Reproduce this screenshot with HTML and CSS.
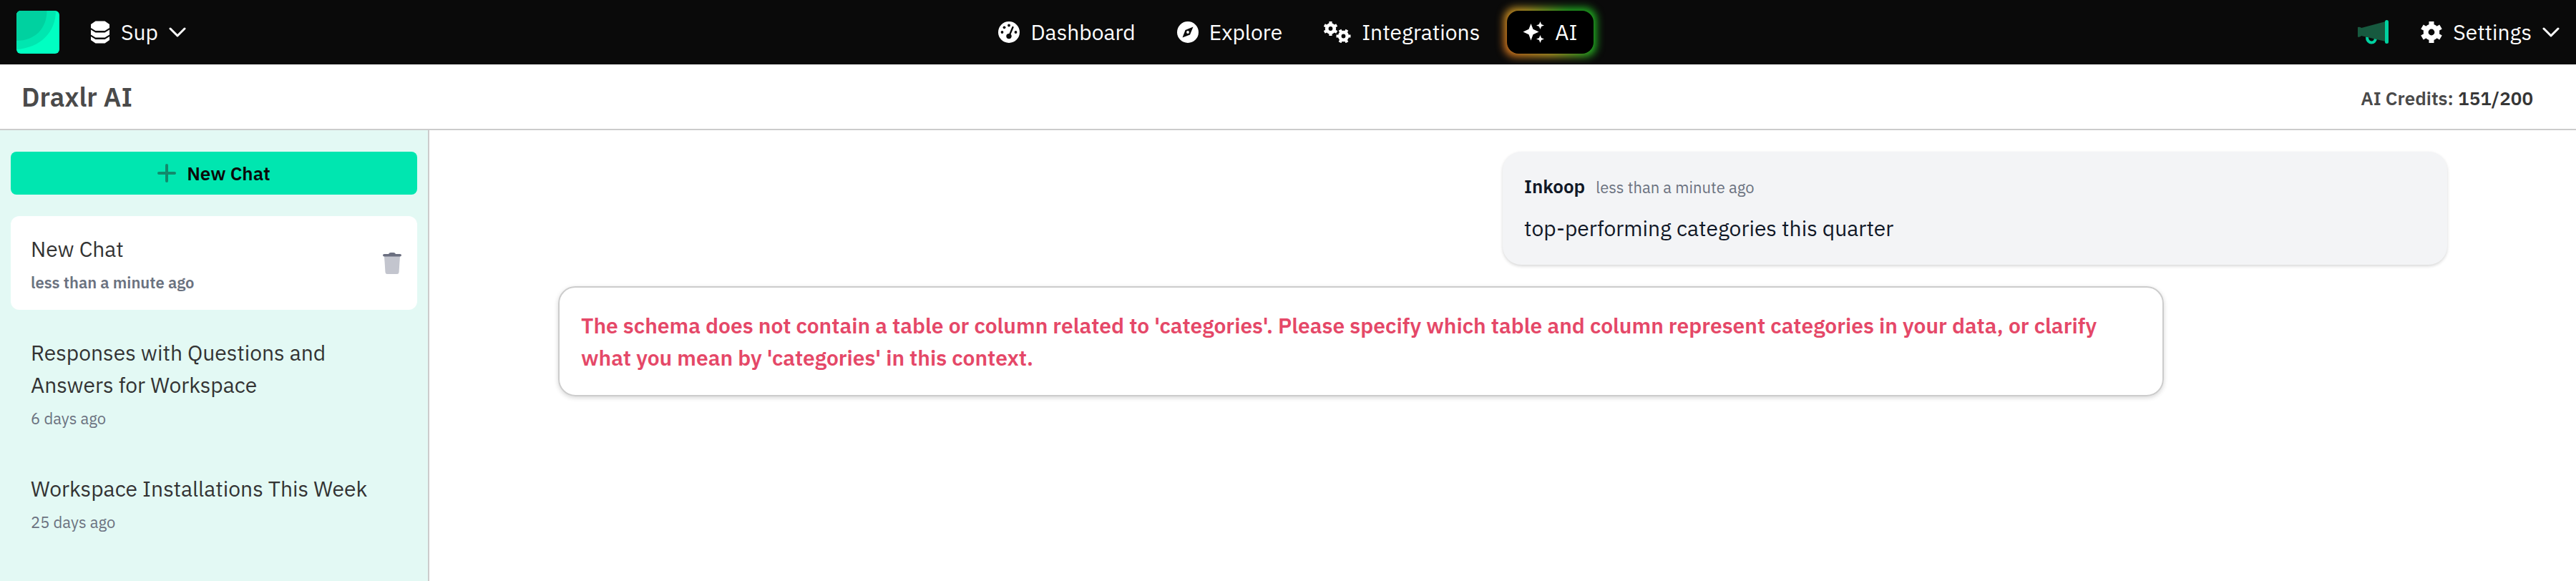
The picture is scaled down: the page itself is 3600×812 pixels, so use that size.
FILE: index.html
```html
<!DOCTYPE html>
<html lang="en">
<head>
    <meta charset="UTF-8">
    <meta name="viewport" content="width=device-width, initial-scale=1.0">
    <title>Draxlr AI</title>
    <link rel="stylesheet" href="styles.css">
</head>
<body>
    <!-- Top Navigation -->
    <nav class="navbar">
        <div class="nav-left">
            <a href="#" class="logo" aria-label="Draxlr">
                <svg width="60" height="60" viewBox="0 0 60 60">
                    <rect width="60" height="60" fill="#00ffc2"/>
                    <path d="M0 0h55c0 30-22 52-55 54z" fill="#00e6b0"/>
                    <path d="M0 0h42.500c0 25-17 42-42.500 42z" fill="#00d1a0"/>
                </svg>
            </a>
            <button type="button" class="nav-item">
                <svg width="28" height="32" viewBox="0 0 28 32" fill="#fff">
                    <path d="M7.500 0.500h13L27 5v5l-6.500 4h-13L1 10V5z"/>
                    <path d="M1 12.500l6.500 4h13l6.500-4v7l-6.500 4h-13L1 19.500z"/>
                    <path d="M1 22l6.500 4h13l6.500-4v5l-6.500 4.500h-13L1 27z"/>
                </svg>
                <span>Sup</span>
                <svg class="chevron" width="24" height="14" viewBox="0 0 24 14"><path d="M2 2l10 10L22 2"/></svg>
            </button>
        </div>

        <div class="nav-links">
            <a href="#" class="nav-item">
                <svg width="30" height="30" viewBox="0 0 30 30">
                    <circle cx="15" cy="15" r="15" fill="#fff"/>
                    <g fill="#0a0a0a">
                        <circle cx="5.500" cy="15" r="1.900"/>
                        <circle cx="8.500" cy="8.300" r="1.900"/>
                        <circle cx="15" cy="5.500" r="1.900"/>
                        <circle cx="24.500" cy="15" r="1.900"/>
                        <circle cx="15" cy="20.600" r="3.700"/>
                    </g>
                    <path d="M15.800 19l4.700-11" stroke="#0a0a0a" stroke-width="2.400" stroke-linecap="round"/>
                </svg>
                <span>Dashboard</span>
            </a>
            <a href="#" class="nav-item">
                <svg width="30" height="30" viewBox="0 0 30 30">
                    <circle cx="15" cy="15" r="15" fill="#fff"/>
                    <path d="M22.500 7.500l-4.500 11-10.500 4 4-10.500z" fill="#0a0a0a"/>
                    <circle cx="15" cy="15" r="1.900" fill="#fff"/>
                </svg>
                <span>Explore</span>
            </a>
            <a href="#" class="nav-item">
                <svg width="38" height="30" viewBox="0 0 38 30" fill="none" stroke="#fff">
                    <g transform="translate(9.500 10)">
                        <circle r="5.300" stroke-width="4.800"/>
                        <path d="M0-7v-3M6.100-3.500l2.600-1.500M6.100 3.500L8.700 5M0 7v3M-6.100 3.500L-8.700 5M-6.100-3.500L-8.700-5" stroke-width="4.200"/>
                    </g>
                    <g transform="translate(27.500 20.500)">
                        <circle r="5.300" stroke-width="4.800"/>
                        <path d="M7 0h3M3.500 6.100L5 8.700M-3.500 6.100L-5 8.700M-7 0h-3M-3.500-6.100L-5-8.700M3.500-6.100L5-8.700" stroke-width="4.200"/>
                    </g>
                </svg>
                <span>Integrations</span>
            </a>
            <a href="#" class="nav-item nav-ai">
                <svg width="30" height="30" viewBox="0 0 30 30" fill="#fff">
                    <path d="M11.500 3l3 7.800 8 3.700-8 3.700-3 8.300-3-8.300-8-3.700 8-3.700z"/>
                    <path d="M24.500 0l1.600 3.900L30 5.500l-3.900 1.600-1.600 3.900-1.600-3.900L19 5.500l3.900-1.600z"/>
                    <path d="M24.500 19l1.600 3.900 3.900 1.600-3.900 1.600-1.600 3.900-1.600-3.900-3.900-1.600 3.900-1.600z"/>
                </svg>
                <span>AI</span>
            </a>
        </div>

        <div class="nav-right">
            <button type="button" class="nav-item" aria-label="Announcements">
                <svg width="44" height="36" viewBox="0 0 44 36">
                    <path d="M13 24.500c-.5 10.500 12.500 10.500 12 1" fill="none" stroke="#00d1a0" stroke-width="4"/>
                    <path d="M0 11q3-1 5 1L39 3v28L5 23q-2 2.500-5 1.500z" fill="#17593f"/>
                    <rect x="38" y="1" width="5" height="33" rx="2.500" fill="#00d1a0"/>
                </svg>
            </button>
            <button type="button" class="nav-item">
                <svg width="30" height="30" viewBox="0 0 30 30" fill="none" stroke="#fff">
                    <circle cx="15" cy="15" r="7.800" stroke-width="6.800"/>
                    <path d="M15 5V0M23.700 10L28 7.500M23.700 20l4.300 2.500M15 25v5M6.300 20L2 22.500M6.300 10L2 7.500" stroke-width="7"/>
                </svg>
                <span>Settings</span>
                <svg class="chevron" width="24" height="14" viewBox="0 0 24 14"><path d="M2 2l10 10L22 2"/></svg>
            </button>
        </div>
    </nav>

    <!-- Page Header -->
    <header class="page-header">
        <h1>Draxlr AI</h1>
        <p class="credits">AI Credits: <span>151/200</span></p>
    </header>

    <div class="container">
        <!-- Sidebar with chat history -->
        <aside class="sidebar">
            <button type="button" class="new-chat">
                <svg width="26" height="26" viewBox="0 0 26 26"><path d="M13 2v22M2 13h22"/></svg>
                <span>New Chat</span>
            </button>
            <ul class="chat-list">
                <li class="chat active">
                    <a href="#">
                        <span class="chat-title">New Chat</span>
                        <span class="chat-time">less than a minute ago</span>
                    </a>
                    <button type="button" class="delete-chat" aria-label="Delete chat">
                        <svg width="26" height="30" viewBox="0 0 26 30">
                            <path d="M2 5h22l-1.500 22.500q-.2 2.500-2.500 2.500H6q-2.300 0-2.500-2.500z" fill="#c3c5ce"/>
                            <path d="M2 2h6q1-2 3-2h4q2 0 3 2h6q2 0 2 1.800T24 5.600H2Q0 5.600 0 3.800T2 2z" fill="#6b6f80"/>
                        </svg>
                    </button>
                </li>
                <li class="chat">
                    <a href="#">
                        <span class="chat-title">Responses with Questions and Answers for Workspace</span>
                        <span class="chat-time">6 days ago</span>
                    </a>
                </li>
                <li class="chat">
                    <a href="#">
                        <span class="chat-title">Workspace Installations This Week</span>
                        <span class="chat-time">25 days ago</span>
                    </a>
                </li>
            </ul>
        </aside>

        <!-- Conversation -->
        <main class="conversation">
            <article class="message">
                <div class="message-head">
                    <strong>Inkoop</strong>
                    <span>less than a minute ago</span>
                </div>
                <p>top-performing categories this quarter</p>
            </article>
            <article class="reply">
                <p>The schema does not contain a table or column related to 'categories'. Please specify which table and column represent categories in your data, or clarify what you mean by 'categories' in this context.</p>
            </article>
        </main>
    </div>
</body>
</html>
```
FILE: styles.css
```css
* {
    margin: 0;
    padding: 0;
    box-sizing: border-box;
}

body {
    font-family: 'IBM Plex Sans', Roboto, sans-serif;
    font-size: 30px;
    line-height: 45px;
    background: #fff;
    color: #333;
    min-height: 100vh;
    display: flex;
    flex-direction: column;
}

a {
    color: inherit;
    text-decoration: none;
}

button {
    font: inherit;
    color: inherit;
    background: none;
    border: none;
    cursor: pointer;
}

svg {
    display: block;
    flex-shrink: 0;
}

/* Top Navigation */
.navbar {
    display: grid;
    grid-template-columns: 1fr auto 1fr;
    align-items: center;
    height: 90px;
    padding: 0 23px;
    background: #0a0a0a;
    border-bottom: 1px solid #000;
    color: #fff;
}

.nav-left,
.nav-links,
.nav-right {
    display: flex;
    align-items: center;
}

.nav-left {
    gap: 43px;
}

.nav-links {
    gap: 58px;
    padding-left: 22px;
}

.nav-right {
    justify-content: flex-end;
    gap: 44px;
}

.logo {
    border-radius: 6px;
    overflow: hidden;
}

.nav-item {
    display: flex;
    align-items: center;
    gap: 15px;
}

.chevron {
    fill: none;
    stroke: #fff;
    stroke-width: 3;
    stroke-linecap: round;
    stroke-linejoin: round;
}

.nav-ai {
    position: relative;
    z-index: 0;
    height: 60px;
    padding: 0 22px;
    margin-left: -20px;
}

/* Glow behind the AI button */
.nav-ai::before,
.nav-ai::after {
    content: '';
    position: absolute;
    inset: 0;
    z-index: -1;
    border-radius: 16px;
}

.nav-ai::before {
    inset: -4px;
    background: linear-gradient(60deg, #e0701c, #c8a828 40%, #22b422 75%);
    filter: blur(6px);
}

.nav-ai::after {
    background: #000;
}

/* Page Header */
.page-header {
    display: flex;
    justify-content: space-between;
    align-items: center;
    height: 92px;
    padding: 0 60px 0 30px;
    border-bottom: 2px solid #ccc;
    color: #4a4a4a;
}

.page-header h1 {
    font-size: 37px;
    font-weight: 600;
}

.credits {
    padding-top: 4px;
    font-size: 26px;
    font-weight: 600;
}

.credits span {
    color: #363636;
}

.container {
    display: flex;
    flex: 1;
}

/* Sidebar */
.sidebar {
    width: 600px;
    flex-shrink: 0;
    padding: 30px 15px;
    background: #e3f9f4;
    border-right: 2px solid #ccc;
}

.new-chat {
    display: flex;
    justify-content: center;
    align-items: center;
    gap: 15px;
    width: 100%;
    height: 60px;
    margin-bottom: 30px;
    border-radius: 8px;
    background: #00e6b0;
    color: #0a0a0a;
    font-size: 26px;
    font-weight: 600;
}

.new-chat svg {
    fill: none;
    stroke: #128a6c;
    stroke-width: 4;
    stroke-linecap: round;
}

.chat-list {
    display: flex;
    flex-direction: column;
    gap: 14px;
    list-style: none;
}

.chat {
    display: flex;
    justify-content: space-between;
    align-items: center;
    padding: 23px 22px 22px 28px;
    border-radius: 12px;
}

.chat a {
    display: flex;
    flex-direction: column;
    gap: 8px;
}

.chat.active {
    background: #fff;
}

.chat-time {
    font-size: 22px;
    line-height: 33px;
    color: #6b7280;
}

.active .chat-time {
    font-weight: 600;
}

/* Conversation */
.conversation {
    flex: 1;
    display: flex;
    flex-direction: column;
    gap: 30px;
    padding: 30px 5%;
}

.message {
    align-self: flex-end;
    width: 50%;
    padding: 29px 30px;
    border-radius: 26px;
    background: #f3f4f6;
    box-shadow: 0 2px 4px rgba(0, 0, 0, 0.16);
    color: #111827;
}

.message-head {
    display: flex;
    align-items: baseline;
    gap: 15px;
    margin-bottom: 15px;
    font-size: 26px;
    line-height: 39px;
}

.message-head strong {
    font-weight: 600;
}

.message-head span {
    font-size: 22px;
    color: #6b7280;
}

.reply {
    width: 85%;
    padding: 30px;
    border: 2px solid #ccc;
    border-radius: 24px;
    box-shadow: 0 2px 6px rgba(0, 0, 0, 0.16);
    color: #e54868;
    font-weight: 600;
}
```
